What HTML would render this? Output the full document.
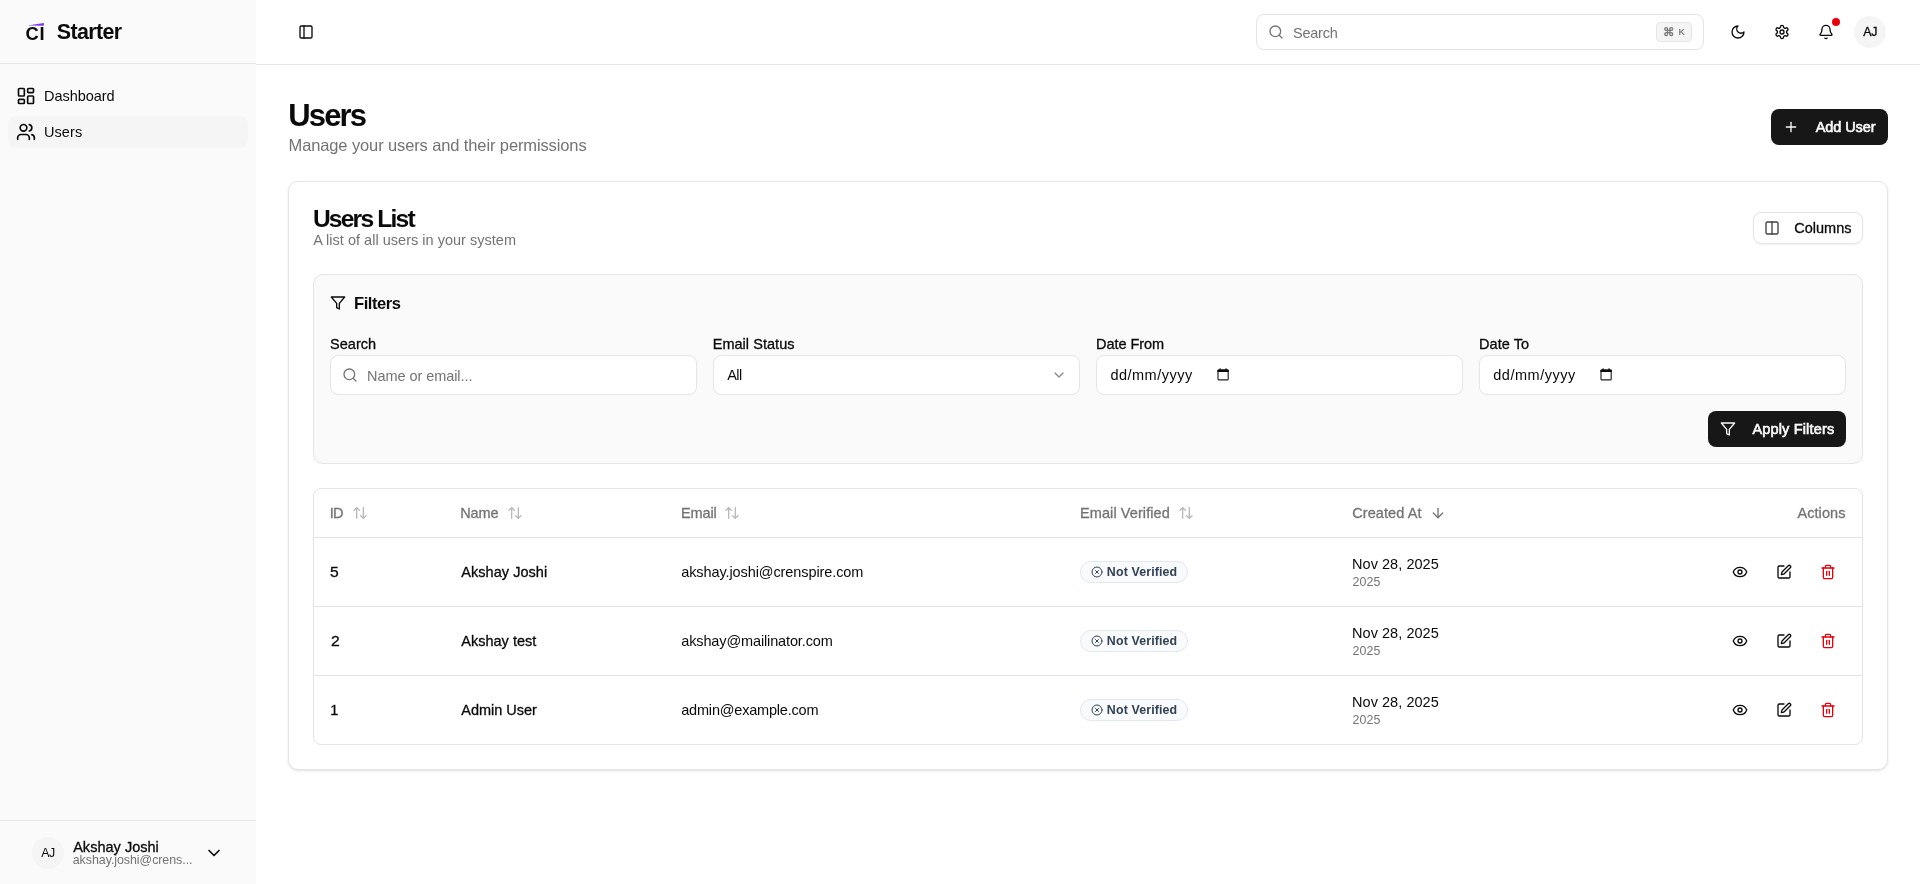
<!DOCTYPE html>
<html lang="en">
<head>
<meta charset="utf-8">
<title>Users</title>
<style>
*{box-sizing:border-box;margin:0;padding:0}
html,body{width:1920px;height:884px;overflow:hidden;background:#fff}
body{font-family:"Liberation Sans",sans-serif;color:#0a0a0a;font-size:14px;position:relative;-webkit-font-smoothing:antialiased}
.abs{position:absolute}
.t{position:absolute;white-space:nowrap;line-height:1}
.med{-webkit-text-stroke:0.3px currentColor}
.b{font-weight:bold}
.muted{color:#737373}
svg.i{position:absolute;fill:none;stroke:currentColor;stroke-width:2;stroke-linecap:round;stroke-linejoin:round;width:16px;height:16px}
/* sidebar */
#sidebar{left:0;top:0;width:256px;height:884px;background:#fafafa}
#sb-head{left:0;top:0;width:256px;height:64px;border-bottom:1px solid #e5e5e5}
#sb-foot{left:0;top:820px;width:256px;height:64px;border-top:1px solid #e5e5e5}
#nav-active{left:8px;top:116px;width:240px;height:32px;border-radius:8px;background:#f5f5f5}
.avatar{position:absolute;width:32px;height:32px;border-radius:50%;background:#f5f5f5}
/* header */
#header{left:256px;top:0;width:1664px;height:65px;border-bottom:1px solid #e5e5e5;background:#fff}
#gsearch{left:1256px;top:14px;width:448px;height:36px;border:1px solid #e5e5e5;border-radius:8px;background:#fff}
#kbd{left:1656px;top:22px;width:36px;height:20px;border:1px solid #e5e5e5;border-radius:4px;background:#f5f5f5}
#dot{left:1832px;top:18px;width:8px;height:8px;border-radius:50%;background:#e7000b}
/* buttons */
.btn-dark{position:absolute;background:#171717;border-radius:8px;color:#fafafa}
.btn-out{position:absolute;background:#fff;border:1px solid #e5e5e5;border-radius:8px;box-shadow:0 1px 2px rgba(0,0,0,.05)}
/* card */
#card{left:288px;top:181px;width:1600px;height:589px;border:1px solid #e5e5e5;border-radius:10px;background:#fff;box-shadow:0 1px 3px rgba(0,0,0,.1),0 1px 2px -1px rgba(0,0,0,.1)}
#filters{left:313px;top:274px;width:1550px;height:190px;border:1px solid #e5e5e5;border-radius:10px;background:#fafafa}
.inp{position:absolute;top:355px;width:367px;height:40px;border:1px solid #e5e5e5;border-radius:8px;background:#fff}
#table{left:313px;top:488px;width:1550px;height:257px;border:1px solid #e5e5e5;border-radius:8px;background:#fff}
.hr{position:absolute;left:314px;width:1548px;height:1px;background:#e5e5e5}
.badge{position:absolute;left:1080px;width:108px;height:22px;border:1px solid #e2e8f0;border-radius:11px;background:#f8fafc;color:#334155}
</style>
</head>
<body>
<div id="root" style="position:absolute;left:0;top:0;width:1920px;height:884px;will-change:transform">
<!-- SIDEBAR -->
<aside>
  <div id="sidebar" class="abs"></div>
  <div id="sb-head" class="abs"></div>
  <svg class="abs" id="logo" viewBox="0 0 24 24" style="left:24px;top:20px;width:24px;height:24px;overflow:visible"><polygon points="3.6,5.5 19.9,3.1 19.9,5.8" fill="#7c3aed"/><text id="t-ci" x="1.5" y="19.5" letter-spacing="0.9" font-family="Liberation Sans, sans-serif" font-weight="bold" font-size="18.3" fill="#0a0a0a">CI</text></svg>
  <span class="t b" id="t-starter" style="left:56.81px;top:22px;font-size:21.4px;letter-spacing:-0.596px;transform:translateY(0.4px)">Starter</span>
  <nav>
    <svg class="i" viewBox="0 0 24 24" style="left:16px;top:86px;width:20px;height:20px;"><rect x="3" y="3" width="7" height="9" rx="1"/><rect x="14" y="3" width="7" height="5" rx="1"/><rect x="14" y="12" width="7" height="9" rx="1"/><rect x="3" y="16" width="7" height="5" rx="1"/></svg>
    <span class="t" id="t-dash" style="left:44.02px;top:89px;font-size:14.5px;letter-spacing:-0.050px">Dashboard</span>
    <div id="nav-active" class="abs"></div>
    <svg class="i" viewBox="0 0 24 24" style="left:16px;top:122px;width:20px;height:20px;"><path d="M16 21v-2a4 4 0 0 0-4-4H6a4 4 0 0 0-4 4v2"/><circle cx="9" cy="7" r="4"/><path d="M22 21v-2a4 4 0 0 0-3-3.87"/><path d="M16 3.13a4 4 0 0 1 0 7.75"/></svg>
    <span class="t" id="t-navusers" style="left:43.91px;top:125px;font-size:14.5px;letter-spacing:0.093px">Users</span>
  </nav>
  <div id="sb-foot" class="abs"></div>
  <div class="avatar" style="left:32px;top:837px"></div>
  <span class="t" id="t-aj2" style="left:41.23px;top:847px;font-size:12.4px;letter-spacing:-0.452px">AJ</span>
  <span class="t med" id="t-fname" style="left:73.18px;top:840px;font-size:14.5px;letter-spacing:0.018px">Akshay Joshi</span>
  <span class="t muted" id="t-femail" style="left:72.77px;top:854px;font-size:12.4px;letter-spacing:-0.037px">akshay.joshi@crens...</span>
  <svg class="i" viewBox="0 0 24 24" style="left:204px;top:843px;width:20px;height:20px;"><path d="m6 9 6 6 6-6"/></svg>
</aside>
<!-- HEADER -->
<header>
  <div id="header" class="abs"></div>
  <svg class="i" viewBox="0 0 24 24" style="left:298px;top:24px;width:16px;height:16px;"><rect x="3" y="3" width="18" height="18" rx="2"/><path d="M9 3v18"/></svg>
  <div id="gsearch" class="abs"></div>
  <svg class="i" viewBox="0 0 24 24" style="left:1268px;top:24px;width:16px;height:16px;color:#737373;"><circle cx="11" cy="11" r="8"/><path d="m21 21-4.3-4.3"/></svg>
  <span class="t muted" id="t-gsearch" style="left:1292.92px;top:26px;font-size:14.5px;letter-spacing:-0.199px">Search</span>
  <div id="kbd" class="abs"></div>
  <span class="t muted" id="t-cmd" style="left:1663px;top:27px;font-size:11.5px;font-family:'DejaVu Sans',sans-serif;-webkit-text-stroke:0.35px currentColor">⌘</span>
  <span class="t muted" id="t-k" style="left:1678.6px;top:28px;font-size:9.3px;-webkit-text-stroke:0.2px currentColor">K</span>
  <svg class="i" viewBox="0 0 24 24" style="left:1730px;top:24px;width:16px;height:16px;"><path d="M12 3a6 6 0 0 0 9 9 9 9 0 1 1-9-9Z"/></svg>
  <svg class="i" viewBox="0 0 24 24" style="left:1774px;top:24px;width:16px;height:16px;"><path d="M12.22 2h-.44a2 2 0 0 0-2 2v.18a2 2 0 0 1-1 1.73l-.43.25a2 2 0 0 1-2 0l-.15-.08a2 2 0 0 0-2.73.73l-.22.38a2 2 0 0 0 .73 2.73l.15.1a2 2 0 0 1 1 1.72v.51a2 2 0 0 1-1 1.74l-.15.09a2 2 0 0 0-.73 2.73l.22.38a2 2 0 0 0 2.73.73l.15-.08a2 2 0 0 1 2 0l.43.25a2 2 0 0 1 1 1.73V20a2 2 0 0 0 2 2h.44a2 2 0 0 0 2-2v-.18a2 2 0 0 1 1-1.73l.43-.25a2 2 0 0 1 2 0l.15.08a2 2 0 0 0 2.73-.73l.22-.39a2 2 0 0 0-.73-2.73l-.15-.08a2 2 0 0 1-1-1.74v-.5a2 2 0 0 1 1-1.74l.15-.09a2 2 0 0 0 .73-2.73l-.22-.38a2 2 0 0 0-2.73-.73l-.15.08a2 2 0 0 1-2 0l-.43-.25a2 2 0 0 1-1-1.73V4a2 2 0 0 0-2-2z"/><circle cx="12" cy="12" r="3"/></svg>
  <svg class="i" viewBox="0 0 24 24" style="left:1818px;top:24px;width:16px;height:16px;"><path d="M10.268 21a2 2 0 0 0 3.464 0"/><path d="M3.262 15.326A1 1 0 0 0 4 17h16a1 1 0 0 0 .74-1.673C19.41 13.956 18 12.499 18 8A6 6 0 0 0 6 8c0 4.499-1.411 5.956-2.738 7.326"/></svg>
  <div id="dot" class="abs"></div>
  <div class="avatar" style="left:1854px;top:16px"></div>
  <span class="t med" id="t-aj1" style="left:1863.23px;top:26px;font-size:12.4px;letter-spacing:-0.252px">AJ</span>
</header>
<!-- MAIN -->
<main>
  <h1 class="t b" id="t-h1" style="left:288.36px;top:100px;font-size:31px;letter-spacing:-1.910px">Users</h1>
  <p class="t muted" id="t-sub" style="left:288.51px;top:137px;font-size:16.5px;letter-spacing:-0.118px">Manage your users and their permissions</p>
  <div class="btn-dark" style="left:1771px;top:109px;width:117px;height:36px"></div>
  <svg class="i" viewBox="0 0 24 24" style="left:1783px;top:119px;width:16px;height:16px;color:#fafafa;"><path d="M5 12h14"/><path d="M12 5v14"/></svg>
  <span class="t med" id="t-add" style="left:1815.68px;top:120px;font-size:14.5px;color:#fafafa;letter-spacing:-0.087px;-webkit-text-stroke:0.6px currentColor">Add User</span>

  <section>
  <div id="card" class="abs"></div>
  <h2 class="t b" id="t-h2" style="left:312.91px;top:207px;font-size:24.6px;letter-spacing:-1.800px">Users List</h2>
  <p class="t muted" id="t-sub2" style="left:313.15px;top:233px;font-size:14.5px;letter-spacing:0.019px">A list of all users in your system</p>
  <div class="btn-out" style="left:1753px;top:212px;width:110px;height:32px"></div>
  <svg class="i" viewBox="0 0 24 24" style="left:1764px;top:220px;width:16px;height:16px;color:#404040;"><rect x="3" y="3" width="18" height="18" rx="2"/><path d="M12 3v18"/></svg>
  <span class="t med" id="t-cols" style="left:1794.19px;top:221px;font-size:14.5px;letter-spacing:0.017px">Columns</span>

  <div id="filters" class="abs"></div>
  <svg class="i" viewBox="0 0 24 24" style="left:330px;top:295px;width:16px;height:16px;"><polygon points="22 3 2 3 10 12.46 10 19 14 21 14 12.46 22 3"/></svg>
  <span class="t b" id="t-filters" style="left:353.97px;top:295px;font-size:16.5px;letter-spacing:-0.415px">Filters</span>
  <label class="t med" id="t-l1" style="left:330.05px;top:337px;font-size:14.5px;letter-spacing:0.020px">Search</label>
  <label class="t med" id="t-l2" style="left:712.70px;top:337px;font-size:14.5px;letter-spacing:0.037px">Email Status</label>
  <label class="t med" id="t-l3" style="left:1096.02px;top:337px;font-size:14.5px;letter-spacing:-0.056px">Date From</label>
  <label class="t med" id="t-l4" style="left:1479.02px;top:337px;font-size:14.5px;letter-spacing:0.058px">Date To</label>
  <div class="inp" style="left:330px"></div>
  <div class="inp" style="left:713px"></div>
  <div class="inp" style="left:1096px"></div>
  <div class="inp" style="left:1479px"></div>
  <svg class="i" viewBox="0 0 24 24" style="left:342px;top:367px;width:16px;height:16px;color:#737373;"><circle cx="11" cy="11" r="8"/><path d="m21 21-4.3-4.3"/></svg>
  <span class="t muted" id="t-ph" style="left:367.02px;top:369px;font-size:14.5px;letter-spacing:-0.060px">Name or email...</span>
  <span class="t" id="t-all" style="left:727.24px;top:368px;font-size:14.5px;letter-spacing:-0.592px">All</span>
  <svg class="i" viewBox="0 0 24 24" style="left:1051px;top:367px;width:16px;height:16px;color:#8a8a8a;"><path d="m6 9 6 6 6-6"/></svg>
  <span class="t" id="t-d1" style="left:1110.41px;top:368px;font-size:14.5px;letter-spacing:0.491px">dd/mm/yyyy</span>
  <span class="t" id="t-d2" style="left:1493.24px;top:368px;font-size:14.5px;letter-spacing:0.532px">dd/mm/yyyy</span>
  <svg class="abs" viewBox="0 0 12 13" style="left:1217px;top:368px;width:12px;height:13px"><rect x="1" y="2" width="10.2" height="9.9" rx="1" fill="none" stroke="#1f1f1f" stroke-width="1.15"/><rect x="0.45" y="1.6" width="11.3" height="2.4" rx="0.6" fill="#0a0a0a"/><rect x="2.5" y="0.4" width="1.3" height="1.6" fill="#0a0a0a"/><rect x="8.4" y="0.4" width="1.3" height="1.6" fill="#0a0a0a"/></svg>
  <svg class="abs" viewBox="0 0 12 13" style="left:1600px;top:368px;width:12px;height:13px"><rect x="1" y="2" width="10.2" height="9.9" rx="1" fill="none" stroke="#1f1f1f" stroke-width="1.15"/><rect x="0.45" y="1.6" width="11.3" height="2.4" rx="0.6" fill="#0a0a0a"/><rect x="2.5" y="0.4" width="1.3" height="1.6" fill="#0a0a0a"/><rect x="8.4" y="0.4" width="1.3" height="1.6" fill="#0a0a0a"/></svg>
  <div class="btn-dark" style="left:1708px;top:411px;width:138px;height:36px"></div>
  <svg class="i" viewBox="0 0 24 24" style="left:1720px;top:421px;width:16px;height:16px;color:#fafafa;"><polygon points="22 3 2 3 10 12.46 10 19 14 21 14 12.46 22 3"/></svg>
  <span class="t med" id="t-apply" style="left:1752.48px;top:422px;font-size:14.5px;color:#fafafa;letter-spacing:0.158px;-webkit-text-stroke:0.6px currentColor">Apply Filters</span>

  <div id="table" class="abs"></div>
  <div class="hr" style="top:537px"></div>
  <div class="hr" style="top:606px"></div>
  <div class="hr" style="top:675px"></div>
  <span class="t med muted" id="t-th1" style="left:329.66px;top:506px;font-size:14.5px;letter-spacing:-0.762px">ID</span>
  <span class="t med muted" id="t-th2" style="left:460.13px;top:506px;font-size:14.5px;letter-spacing:-0.040px">Name</span>
  <span class="t med muted" id="t-th3" style="left:681.02px;top:506px;font-size:14.5px;letter-spacing:-0.118px">Email</span>
  <span class="t med muted" id="t-th4" style="left:1080.02px;top:506px;font-size:14.5px;letter-spacing:0.084px">Email Verified</span>
  <span class="t med muted" id="t-th5" style="left:1352.19px;top:506px;font-size:14.5px;letter-spacing:0.095px">Created At</span>
  <span class="t med muted" id="t-th6" style="left:1797.48px;top:506px;font-size:14.5px;letter-spacing:0.067px">Actions</span>
  <svg class="i" viewBox="0 0 24 24" style="left:352px;top:505px;width:16px;height:16px;color:#b9b9b9;"><path d="m21 16-4 4-4-4"/><path d="M17 20V4"/><path d="m3 8 4-4 4 4"/><path d="M7 4v16"/></svg>
  <svg class="i" viewBox="0 0 24 24" style="left:507px;top:505px;width:16px;height:16px;color:#b9b9b9;"><path d="m21 16-4 4-4-4"/><path d="M17 20V4"/><path d="m3 8 4-4 4 4"/><path d="M7 4v16"/></svg>
  <svg class="i" viewBox="0 0 24 24" style="left:724px;top:505px;width:16px;height:16px;color:#b9b9b9;"><path d="m21 16-4 4-4-4"/><path d="M17 20V4"/><path d="m3 8 4-4 4 4"/><path d="M7 4v16"/></svg>
  <svg class="i" viewBox="0 0 24 24" style="left:1178px;top:505px;width:16px;height:16px;color:#b9b9b9;"><path d="m21 16-4 4-4-4"/><path d="M17 20V4"/><path d="m3 8 4-4 4 4"/><path d="M7 4v16"/></svg>
  <svg class="i" viewBox="0 0 24 24" style="left:1430px;top:505px;width:16px;height:16px;color:#737373;"><path d="M12 5v14"/><path d="m19 12-7 7-7-7"/></svg>
  <span class="t med" id="t-r0id" style="left:329.80px;top:565px;font-size:14.5px;letter-spacing:0.000px;transform:scaleX(1.08);transform-origin:0 50%">5</span>
  <span class="t med" id="t-r0name" style="left:461.24px;top:565px;font-size:14.5px;letter-spacing:0.045px">Akshay Joshi</span>
  <span class="t" id="t-r0email" style="left:681.24px;top:565px;font-size:14.5px;letter-spacing:-0.095px">akshay.joshi@crenspire.com</span>
  <div class="badge" style="top:561px"></div>
  <svg class="i" viewBox="0 0 24 24" style="left:1091px;top:566px;width:12px;height:12px;color:#334155;"><circle cx="12" cy="12" r="10"/><path d="m15 9-6 6"/><path d="m9 9 6 6"/></svg>
  <span class="t b" id="t-r0badge" style="left:1106.85px;top:566px;font-size:12.4px;color:#334155;letter-spacing:0.134px">Not Verified</span>
  <span class="t" id="t-r0date" style="left:1352.02px;top:557px;font-size:14.5px;letter-spacing:0.046px">Nov 28, 2025</span>
  <span class="t muted" id="t-r0year" style="left:1352.50px;top:576px;font-size:12.4px;letter-spacing:0.134px">2025</span>
  <svg class="i" viewBox="0 0 24 24" style="left:1732px;top:564px;width:16px;height:16px;"><path d="M2.062 12.348a1 1 0 0 1 0-.696 10.75 10.75 0 0 1 19.876 0 1 1 0 0 1 0 .696 10.75 10.75 0 0 1-19.876 0"/><circle cx="12" cy="12" r="3"/></svg>
  <svg class="i" viewBox="0 0 24 24" style="left:1776px;top:564px;width:16px;height:16px;"><path d="M12 3H5a2 2 0 0 0-2 2v14a2 2 0 0 0 2 2h14a2 2 0 0 0 2-2v-7"/><path d="M18.375 2.625a1 1 0 0 1 3 3l-9.013 9.014a2 2 0 0 1-.853.505l-2.873.84a.5.5 0 0 1-.62-.62l.84-2.873a2 2 0 0 1 .506-.852z"/></svg>
  <svg class="i" viewBox="0 0 24 24" style="left:1820px;top:564px;width:16px;height:16px;color:#e7000b;"><path d="M3 6h18"/><path d="M19 6v14c0 1-1 2-2 2H7c-1 0-2-1-2-2V6"/><path d="M8 6V4c0-1 1-2 2-2h4c1 0 2 1 2 2v2"/><line x1="10" x2="10" y1="11" y2="17"/><line x1="14" x2="14" y1="11" y2="17"/></svg>
  <span class="t med" id="t-r1id" style="left:330.65px;top:634px;font-size:14.5px;letter-spacing:0.000px;transform:scaleX(1.08);transform-origin:0 50%">2</span>
  <span class="t med" id="t-r1name" style="left:461.24px;top:634px;font-size:14.5px;letter-spacing:0.014px">Akshay test</span>
  <span class="t" id="t-r1email" style="left:681.24px;top:634px;font-size:14.5px;letter-spacing:-0.129px">akshay@mailinator.com</span>
  <div class="badge" style="top:630px"></div>
  <svg class="i" viewBox="0 0 24 24" style="left:1091px;top:635px;width:12px;height:12px;color:#334155;"><circle cx="12" cy="12" r="10"/><path d="m15 9-6 6"/><path d="m9 9 6 6"/></svg>
  <span class="t b" id="t-r1badge" style="left:1106.85px;top:635px;font-size:12.4px;color:#334155;letter-spacing:0.134px">Not Verified</span>
  <span class="t" id="t-r1date" style="left:1352.02px;top:626px;font-size:14.5px;letter-spacing:0.046px">Nov 28, 2025</span>
  <span class="t muted" id="t-r1year" style="left:1352.50px;top:645px;font-size:12.4px;letter-spacing:0.134px">2025</span>
  <svg class="i" viewBox="0 0 24 24" style="left:1732px;top:633px;width:16px;height:16px;"><path d="M2.062 12.348a1 1 0 0 1 0-.696 10.75 10.75 0 0 1 19.876 0 1 1 0 0 1 0 .696 10.75 10.75 0 0 1-19.876 0"/><circle cx="12" cy="12" r="3"/></svg>
  <svg class="i" viewBox="0 0 24 24" style="left:1776px;top:633px;width:16px;height:16px;"><path d="M12 3H5a2 2 0 0 0-2 2v14a2 2 0 0 0 2 2h14a2 2 0 0 0 2-2v-7"/><path d="M18.375 2.625a1 1 0 0 1 3 3l-9.013 9.014a2 2 0 0 1-.853.505l-2.873.84a.5.5 0 0 1-.62-.62l.84-2.873a2 2 0 0 1 .506-.852z"/></svg>
  <svg class="i" viewBox="0 0 24 24" style="left:1820px;top:633px;width:16px;height:16px;color:#e7000b;"><path d="M3 6h18"/><path d="M19 6v14c0 1-1 2-2 2H7c-1 0-2-1-2-2V6"/><path d="M8 6V4c0-1 1-2 2-2h4c1 0 2 1 2 2v2"/><line x1="10" x2="10" y1="11" y2="17"/><line x1="14" x2="14" y1="11" y2="17"/></svg>
  <span class="t med" id="t-r2id" style="left:330.16px;top:703px;font-size:14.5px;letter-spacing:0.000px">1</span>
  <span class="t med" id="t-r2name" style="left:461.24px;top:703px;font-size:14.5px;letter-spacing:-0.013px">Admin User</span>
  <span class="t" id="t-r2email" style="left:681.24px;top:703px;font-size:14.5px;letter-spacing:-0.196px">admin@example.com</span>
  <div class="badge" style="top:699px"></div>
  <svg class="i" viewBox="0 0 24 24" style="left:1091px;top:704px;width:12px;height:12px;color:#334155;"><circle cx="12" cy="12" r="10"/><path d="m15 9-6 6"/><path d="m9 9 6 6"/></svg>
  <span class="t b" id="t-r2badge" style="left:1106.85px;top:704px;font-size:12.4px;color:#334155;letter-spacing:0.134px">Not Verified</span>
  <span class="t" id="t-r2date" style="left:1352.02px;top:695px;font-size:14.5px;letter-spacing:0.046px">Nov 28, 2025</span>
  <span class="t muted" id="t-r2year" style="left:1352.50px;top:714px;font-size:12.4px;letter-spacing:0.134px">2025</span>
  <svg class="i" viewBox="0 0 24 24" style="left:1732px;top:702px;width:16px;height:16px;"><path d="M2.062 12.348a1 1 0 0 1 0-.696 10.75 10.75 0 0 1 19.876 0 1 1 0 0 1 0 .696 10.75 10.75 0 0 1-19.876 0"/><circle cx="12" cy="12" r="3"/></svg>
  <svg class="i" viewBox="0 0 24 24" style="left:1776px;top:702px;width:16px;height:16px;"><path d="M12 3H5a2 2 0 0 0-2 2v14a2 2 0 0 0 2 2h14a2 2 0 0 0 2-2v-7"/><path d="M18.375 2.625a1 1 0 0 1 3 3l-9.013 9.014a2 2 0 0 1-.853.505l-2.873.84a.5.5 0 0 1-.62-.62l.84-2.873a2 2 0 0 1 .506-.852z"/></svg>
  <svg class="i" viewBox="0 0 24 24" style="left:1820px;top:702px;width:16px;height:16px;color:#e7000b;"><path d="M3 6h18"/><path d="M19 6v14c0 1-1 2-2 2H7c-1 0-2-1-2-2V6"/><path d="M8 6V4c0-1 1-2 2-2h4c1 0 2 1 2 2v2"/><line x1="10" x2="10" y1="11" y2="17"/><line x1="14" x2="14" y1="11" y2="17"/></svg>
  </section>
</main>
</div>
</body>
</html>
